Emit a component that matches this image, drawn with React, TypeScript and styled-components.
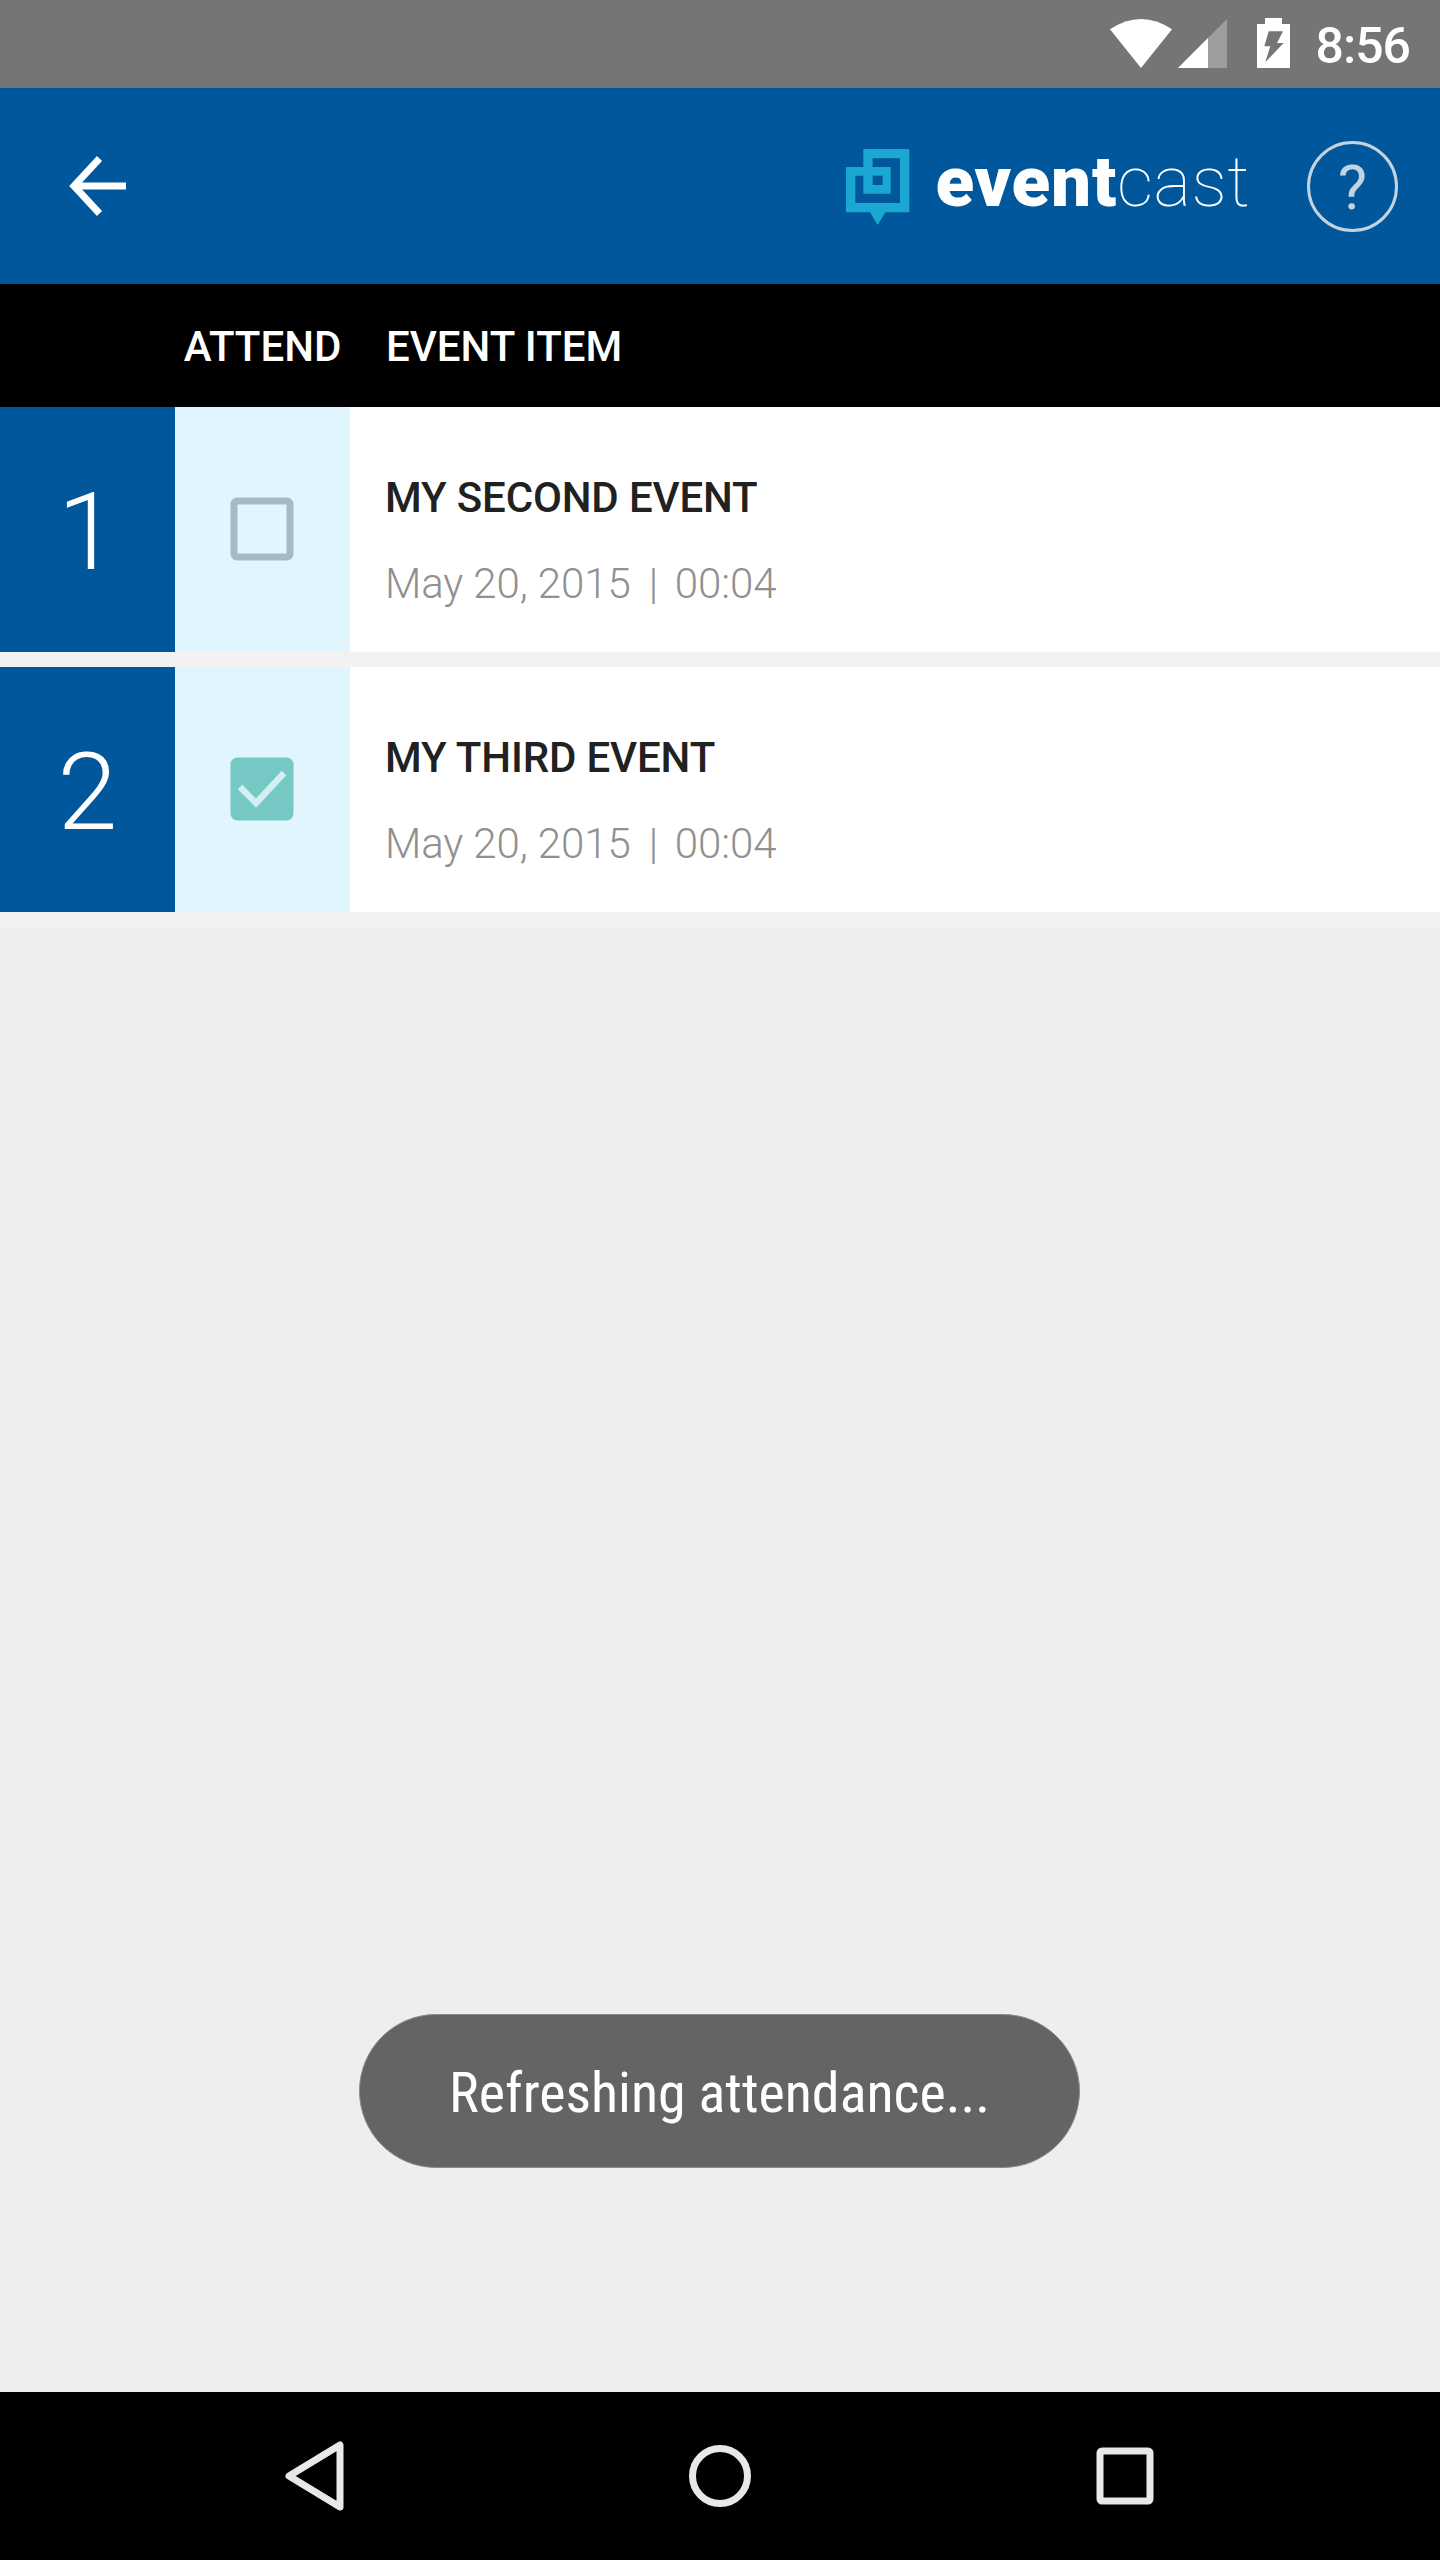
import { FC } from 'react';
import styled, { createGlobalStyle } from 'styled-components';

const GlobalStyle = createGlobalStyle`
  html, body {
    margin: 0;
    padding: 0;
    background: #eeeeee;
  }
  * {
    box-sizing: border-box;
  }
`;

const Page = styled.div`
  width: 1440px;
  height: 2560px;
  display: flex;
  flex-direction: column;
  font-family: Roboto, 'Liberation Sans', sans-serif;
`;

const StatusBar = styled.div`
  height: 88px;
  flex: none;
  background: #757575;
  display: flex;
  align-items: flex-start;
  justify-content: flex-end;
  padding: 18px 30px 0 0;
`;

const StatusIcons = styled.div`
  display: flex;
  align-items: flex-start;
  margin-right: 26px;
`;

const WifiIcon = styled.svg`
  margin-top: 1px;
  margin-right: 6px;
`;

const SignalIcon = styled.svg`
  margin-top: 1px;
  margin-right: 30px;
`;

const Clock = styled.span`
  font-size: 50px;
  font-weight: 500;
  line-height: 56px;
  color: #fff;
  letter-spacing: -1px;
`;

const Header = styled.header`
  height: 196px;
  flex: none;
  background: #01579b;
  display: flex;
  align-items: center;
  padding: 0 42px 0 68px;
`;

const BackButton = styled.svg`
  margin-right: auto;
`;

const LogoMark = styled.svg`
  margin-right: 15px;
`;

const Wordmark = styled.div`
  font-size: 71px;
  line-height: 70px;
  color: #fff;
  margin-right: 57px;
  margin-top: -8px;
  white-space: nowrap;
`;

const WordBold = styled.span`
  font-weight: 900;
  letter-spacing: 0.8px;
`;

const WordThin = styled.span`
  font-weight: 100;
  letter-spacing: 0.4px;
`;

const HelpButton = styled.div`
  width: 91px;
  height: 91px;
  border-radius: 50%;
  border: 3px solid #c3d3e0;
  color: #c3d3e0;
  font-size: 62px;
  font-weight: 400;
  padding-top: 2px;
  display: flex;
  align-items: center;
  justify-content: center;
`;

const ColumnBar = styled.div`
  height: 123px;
  flex: none;
  background: #000;
  display: grid;
  grid-template-columns: 175px 175px 1fr;
  align-items: center;
  padding-top: 3px;
  color: #fff;
  font-size: 42px;
  font-weight: 500;
  line-height: 50px;
`;

const ColumnAttend = styled.div`
  grid-column: 2;
  text-align: center;
  white-space: nowrap;
`;

const ColumnEvent = styled.div`
  padding-left: 36px;
`;

const EventList = styled.div`
  flex: none;
  background: #f2f2f2;
`;

const EventRow = styled.div`
  height: 245px;
  margin-bottom: 15px;
  background: #fff;
  display: grid;
  grid-template-columns: 175px 175px 1fr;
`;

const RowNumber = styled.div`
  background: #01579b;
  color: #fff;
  font-size: 108px;
  font-weight: 350;
  padding-top: 5px;
  display: flex;
  align-items: center;
  justify-content: center;
`;

const CheckCell = styled.div`
  background: #e1f5fe;
  display: flex;
  align-items: center;
  justify-content: center;
  padding: 0 1px 2px 0;
`;

const EventInfo = styled.div`
  padding: 66px 0 0 35px;
`;

const EventTitle = styled.div`
  font-size: 42px;
  line-height: 50px;
  font-weight: 500;
  letter-spacing: -0.15px;
  color: #212121;
`;

const EventDate = styled.div`
  margin-top: 36px;
  font-size: 42px;
  line-height: 50px;
  font-weight: 300;
  letter-spacing: -0.1px;
  color: #909090;
`;

const DateSeparator = styled.span`
  margin: 0 17px 0 18px;
`;

const Content = styled.main`
  flex: 1;
  display: flex;
  flex-direction: column;
  align-items: center;
  padding-right: 1px;
`;

const Toast = styled.div`
  width: 721px;
  height: 154px;
  margin-top: auto;
  margin-bottom: 224px;
  padding-top: 4px;
  border-radius: 77px;
  border: 1px solid #8c8c8c;
  background: #646464;
  color: #fff;
  font-size: 56px;
  font-stretch: 75%;
  display: flex;
  align-items: center;
  justify-content: center;
`;

const NavBar = styled.nav`
  height: 168px;
  flex: none;
  background: #000;
  display: flex;
  align-items: center;
  justify-content: center;
`;

const NavSlot = styled.div`
  width: 405px;
  display: flex;
  justify-content: center;
`;

const Check: FC<{ checked: boolean }> = ({ checked }) =>
  checked ? (
    <svg width="64" height="64" viewBox="0 0 64 64">
      <rect x="0.5" y="0.5" width="63" height="63" rx="7" fill="#76c8c4" />
      <path d="M10 30L26 46L54 16" fill="none" stroke="#d3eff2" strokeWidth="6.5" />
    </svg>
  ) : (
    <svg width="64" height="64" viewBox="0 0 64 64">
      <rect x="4" y="4" width="56" height="56" rx="3" fill="none" stroke="#a9b9c1" strokeWidth="7" />
    </svg>
  );

const events = [
  { id: 1, title: 'MY SECOND EVENT', checked: false },
  { id: 2, title: 'MY THIRD EVENT', checked: true },
];

export default function App() {
  return (
    <Page>
      <GlobalStyle />
      <StatusBar>
        <StatusIcons>
          <WifiIcon width="62" height="49" viewBox="0 0 62 49">
            <path d="M31 49L0 10.3Q31 -10.3 62 10.3Z" fill="#fff" />
          </WifiIcon>
          <SignalIcon width="49" height="49" viewBox="0 0 49 49">
            <path d="M0 49L49 0V49Z" fill="#9e9e9e" />
            <path d="M0 49L30 19V49Z" fill="#fff" />
          </SignalIcon>
          <svg width="33" height="50" viewBox="0 0 33 50">
            <path d="M8 0H25V6H33V50H0V6H8Z" fill="#fff" />
            <path d="M11.7 13.3H26L20 25H26.7L8.3 44.3L13.3 28.3H7.3Z" fill="#757575" />
          </svg>
        </StatusIcons>
        <Clock>8:56</Clock>
      </StatusBar>

      <Header>
        <BackButton width="62" height="62" viewBox="0 0 62 62">
          <path d="M58 31H6" fill="none" stroke="#fff" strokeWidth="7" />
          <path d="M31.5 3.5L6 31L31.5 58.5" fill="none" stroke="#fff" strokeWidth="7" />
        </BackButton>
        <LogoMark width="80" height="90" viewBox="0 0 240 270">
          <path d="M70 24H208V214H136L113 252L90 214H18V78H70Z" fill="#1aa7d1" />
          <path d="M98 52H180V186H46V104H70V158H152V78H98Z" fill="#01579b" />
          <rect x="98" y="104" width="30" height="28" fill="#01579b" />
        </LogoMark>
        <Wordmark>
          <WordBold>event</WordBold>
          <WordThin>cast</WordThin>
        </Wordmark>
        <HelpButton>?</HelpButton>
      </Header>

      <ColumnBar>
        <ColumnAttend>ATTEND</ColumnAttend>
        <ColumnEvent>EVENT ITEM</ColumnEvent>
      </ColumnBar>

      <EventList>
        {events.map((event) => (
          <EventRow key={event.id}>
            <RowNumber>{event.id}</RowNumber>
            <CheckCell>
              <Check checked={event.checked} />
            </CheckCell>
            <EventInfo>
              <EventTitle>{event.title}</EventTitle>
              <EventDate>
                May 20, 2015<DateSeparator>|</DateSeparator>00:04
              </EventDate>
            </EventInfo>
          </EventRow>
        ))}
      </EventList>

      <Content>
        <Toast>Refreshing attendance...</Toast>
      </Content>

      <NavBar>
        <NavSlot>
          <svg width="62" height="72" viewBox="0 0 62 72">
            <path d="M56 5V67L5 36Z" fill="none" stroke="#e8e8e8" strokeWidth="7" strokeLinejoin="round" />
          </svg>
        </NavSlot>
        <NavSlot>
          <svg width="64" height="64" viewBox="0 0 64 64">
            <circle cx="32" cy="32" r="27.5" fill="none" stroke="#e8e8e8" strokeWidth="7" />
          </svg>
        </NavSlot>
        <NavSlot>
          <svg width="58" height="58" viewBox="0 0 58 58">
            <rect x="4" y="4" width="50" height="50" rx="2" fill="none" stroke="#e8e8e8" strokeWidth="7" />
          </svg>
        </NavSlot>
      </NavBar>
    </Page>
  );
}
